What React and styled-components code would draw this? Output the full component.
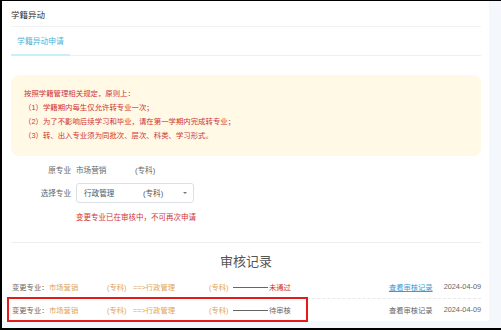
import React from 'react'
import styled, { createGlobalStyle } from 'styled-components'

const Global = createGlobalStyle`
  html, body { margin: 0; padding: 0; }
  body {
    font-family: "Liberation Sans", "Noto Sans CJK SC", sans-serif;
    background: #f4f7fb;
  }
`

const Frame = styled.div`
  width: 501px;
  height: 330px;
  box-sizing: border-box;
  border-top: 1px solid #000;
  border-left: 2px solid #000;
  border-bottom: 2px solid #000;
  background: #f4f7fb;
  overflow: hidden;
`

const Card = styled.div`
  position: relative;
  width: 487px;
  height: 320px;
  box-sizing: border-box;
  background: #fff;
  padding: 0 8px 0 9px;
  display: flex;
  flex-direction: column;
`

const Header = styled.div`
  height: 26px;
  display: flex;
  align-items: center;
  font-size: 8.5px;
  color: #333;
  border-bottom: 1px solid #f2f2f2;
`

const Tabs = styled.div`
  height: 29px;
  display: flex;
  border-bottom: 1px solid #f0f0f0;
`

const Tab = styled.div`
  width: 59px;
  display: flex;
  align-items: center;
  justify-content: center;
  font-size: 7.8px;
  color: #4fb3d9;
  border-bottom: 2px solid #c9f0f8;
  margin-bottom: -1px;
`

const Notice = styled.div`
  margin-top: 19px;
  background: #fff9e6;
  border-radius: 8px;
  padding: 12px 13px 13px;
  color: #cf3434;
  font-size: 7.4px;
  line-height: 14px;
`

const FormRow = styled.div`
  display: flex;
  align-items: center;
  height: ${p => p.h}px;
  margin-top: ${p => p.mt || 0}px;
  font-size: 7.6px;
  color: #666;
`

const Label = styled.span`
  width: 60px;
  text-align: right;
  margin-right: 5px;
`

const Value = styled.span`
  display: inline-block;
  width: ${p => p.w}px;
`

const Select = styled.div`
  width: 118px;
  height: 20px;
  box-sizing: border-box;
  border: 1px solid #dcdfe6;
  border-radius: 3px;
  padding-left: 7px;
  display: flex;
  align-items: center;
  color: #555;
`

const Caret = styled.span`
  margin-left: auto;
  margin-right: 6px;
  width: 0;
  height: 0;
  border-left: 2px solid transparent;
  border-right: 2px solid transparent;
  border-top: 2px solid #777;
`

const Hint = styled.div`
  margin-left: 65px;
  margin-top: 9px;
  height: 12px;
  line-height: 12px;
  font-size: 7.5px;
  color: #cf3434;
`

const Divider = styled.div`
  margin-top: 18px;
  border-top: 1px solid #eeeeee;
`

const Title = styled.div`
  height: 34px;
  display: flex;
  align-items: center;
  justify-content: center;
  font-size: 13px;
  color: #555;
  padding-top: 2px;
  box-sizing: border-box;
`

const Record = styled.div`
  height: 23px;
  display: flex;
  align-items: center;
  font-size: 7.3px;
  color: #666;
  padding-left: 1px;
  border-bottom: ${p => (p.last ? 'none' : '1px dashed #e8e8e8')};
`

const Seg = styled.span`
  display: inline-block;
  width: ${p => (p.w ? p.w + 'px' : 'auto')};
  color: ${p => p.c || '#666'};
  white-space: nowrap;
`

const Dash = styled.span`
  display: inline-block;
  width: 35px;
  height: 1px;
  background: #666;
  margin: 1px 1px 0 0;
`

const Right = styled.div`
  margin-left: auto;
  display: flex;
  gap: 11px;
  align-items: center;
`

const Link = styled.span`
  color: ${p => (p.active ? '#3a9bd5' : '#666')};
  text-decoration: ${p => (p.active ? 'underline' : 'none')};
`

const Mark = styled.div`
  position: absolute;
  left: 5px;
  top: 296px;
  width: 301px;
  height: 25px;
  box-sizing: border-box;
  border: 2px solid #e31b1b;
`

const ORANGE = '#dea45a'

const records = [
  { status: '未通过', statusColor: '#cf3434', active: true },
  { status: '待审核', statusColor: '#666', active: false }
]

export default function App() {
  return (
    <Frame>
      <Global />
      <Card>
        <Header>学籍异动</Header>
        <Tabs>
          <Tab>学籍异动申请</Tab>
        </Tabs>
        <Notice>
          <div>按照学籍管理相关规定，原则上：</div>
          <div>（1）学籍期内每生仅允许转专业一次；</div>
          <div>（2）为了不影响后续学习和毕业，请在第一学期内完成转专业；</div>
          <div>（3）转、出入专业须为同批次、层次、科类、学习形式。</div>
        </Notice>
        <FormRow h={14} mt={7}>
          <Label>原专业</Label>
          <Value w={59}>市场营销</Value>
          <Value>(专科)</Value>
        </FormRow>
        <FormRow h={20} mt={6}>
          <Label>选择专业</Label>
          <Select>
            <Value w={59}>行政管理</Value>
            <Value>(专科)</Value>
            <Caret />
          </Select>
        </FormRow>
        <Hint>变更专业已在审核中，不可再次申请</Hint>
        <Divider />
        <Title>审核记录</Title>
        {records.map((r, i) => (
          <Record key={i} last={i === records.length - 1}>
            <Seg w={37}>变更专业：</Seg>
            <Seg w={58} c={ORANGE}>市场营销</Seg>
            <Seg w={26} c={ORANGE}>(专科)</Seg>
            <Seg w={76} c={ORANGE}>==&gt;行政管理</Seg>
            <Seg w={24} c={ORANGE}>(专科)</Seg>
            <Dash />
            <Seg c={r.statusColor}>{r.status}</Seg>
            <Right>
              <Link active={r.active}>查看审核记录</Link>
              <Seg>2024-04-09</Seg>
            </Right>
          </Record>
        ))}
        <Mark />
      </Card>
    </Frame>
  )
}
